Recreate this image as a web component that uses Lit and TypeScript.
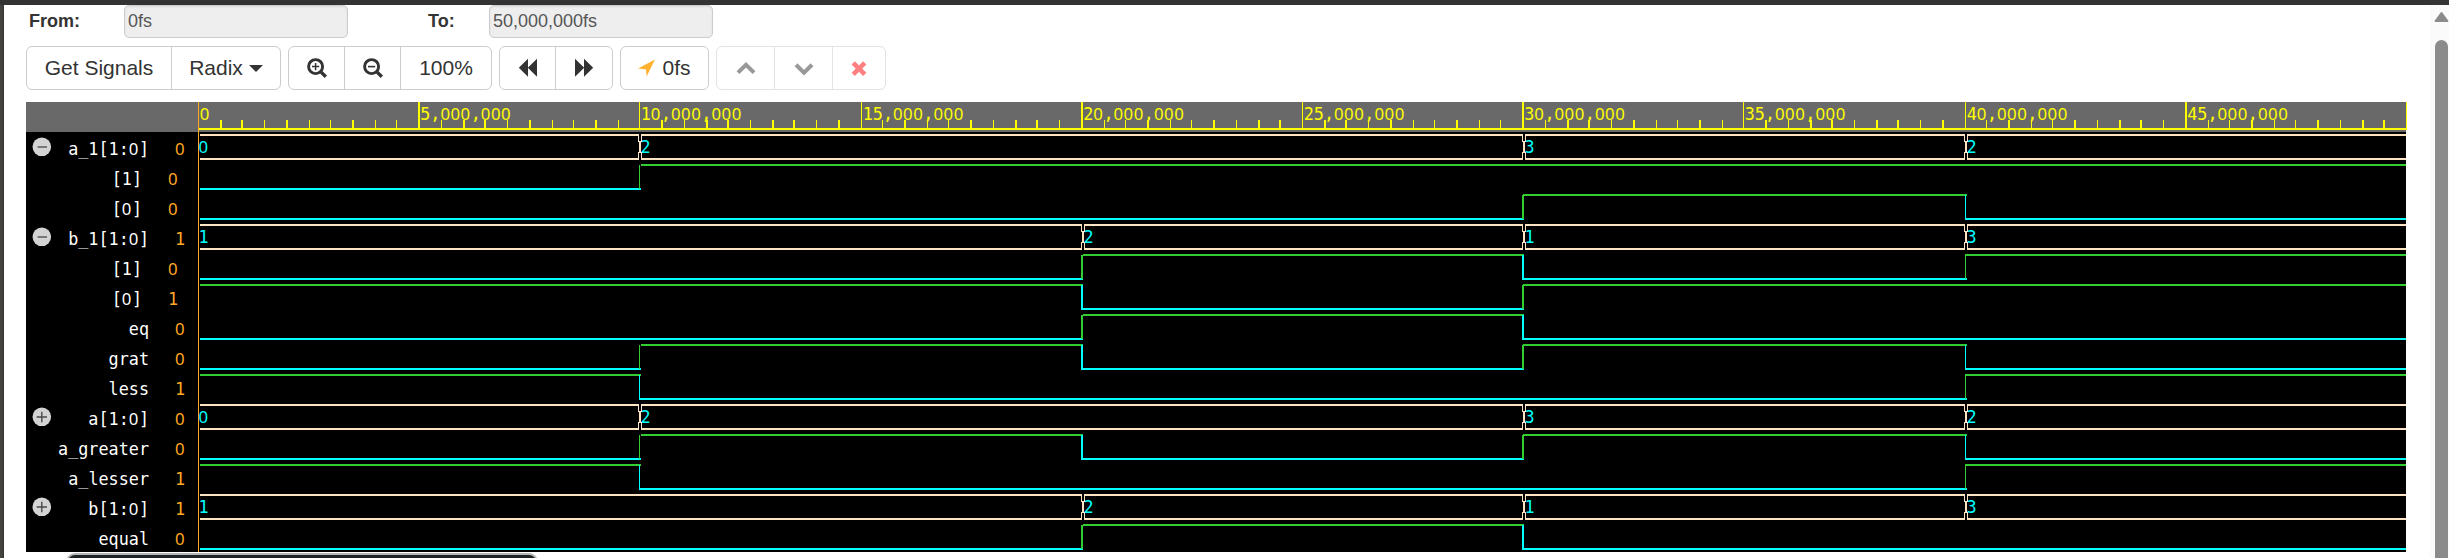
import { LitElement, html, svg, css } from "lit";
import { customElement, property } from "lit/decorators.js";

interface Signal {
  name: string;
  levels: number[];
  kind: "bus" | "bit";
  toggle?: "minus" | "plus";
  nested?: boolean;
}

const SIGNALS: Signal[] = [
  { name: "a_1[1:0]", kind: "bus", toggle: "minus", levels: [0, 2, 2, 3, 2] },
  { name: "[1]", kind: "bit", nested: true, levels: [0, 1, 1, 1, 1] },
  { name: "[0]", kind: "bit", nested: true, levels: [0, 0, 0, 1, 0] },
  { name: "b_1[1:0]", kind: "bus", toggle: "minus", levels: [1, 1, 2, 1, 3] },
  { name: "[1]", kind: "bit", nested: true, levels: [0, 0, 1, 0, 1] },
  { name: "[0]", kind: "bit", nested: true, levels: [1, 1, 0, 1, 1] },
  { name: "eq", kind: "bit", levels: [0, 0, 1, 0, 0] },
  { name: "grat", kind: "bit", levels: [0, 1, 0, 1, 0] },
  { name: "less", kind: "bit", levels: [1, 0, 0, 0, 1] },
  { name: "a[1:0]", kind: "bus", toggle: "plus", levels: [0, 2, 2, 3, 2] },
  { name: "a_greater", kind: "bit", levels: [0, 1, 0, 1, 0] },
  { name: "a_lesser", kind: "bit", levels: [1, 0, 0, 0, 1] },
  { name: "b[1:0]", kind: "bus", toggle: "plus", levels: [1, 1, 2, 1, 3] },
  { name: "equal", kind: "bit", levels: [0, 0, 1, 0, 0] },
];

const WIDTH = 2208;
const HEADER = 30;
const ROW = 30;

/** Horizontal position of the n-th minor tick (500,000fs apart). */
const tickX = (n: number) => 1.5 * Math.round(14.72 * n);
/** Stroke thickness of a one-unit line at x on the 1.5 device grid. */
const tickW = (x: number) => (Number.isInteger(x) ? 1 : 2);

/** Splits text so that zeros can be set in a face whose zero is undotted. */
const zeroParts = (text: string) => text.split(/(0+)/).filter((p) => p !== "");

const monoHtml = (text: string) =>
  zeroParts(text).map((p) => (p[0] === "0" ? html`<span class="zero">${p}</span>` : p));
const monoSvg = (text: string) =>
  zeroParts(text).map((p) =>
    p[0] === "0" ? svg`<tspan class="zero">${p}</tspan>` : svg`<tspan>${p}</tspan>`
  );

const monoStyles = css`
  .mono {
    font-family: "DejaVu Sans Mono", monospace;
    font-size: 16.8px;
    white-space: pre;
  }
  .zero {
    font-family: "Noto Sans", sans-serif;
    letter-spacing: 0.03em;
  }
`;

@customElement("signal-list")
class SignalList extends LitElement {
  static styles = [
    monoStyles,
    css`
      :host {
        display: block;
        width: 172px;
        background: #000;
      }
      .header {
        height: 30px;
        background: #696969;
      }
      .row {
        box-sizing: border-box;
        height: 30px;
        display: grid;
        grid-template-columns: 32px 91px 36px;
        align-items: start;
      }
      .row.nested {
        grid-template-columns: 32px 84px 36px;
      }
      .toggle {
        display: block;
        width: 20px;
        height: 20px;
        margin: 5px 0 0 6px;
      }
      .name,
      .value {
        padding-top: 4px;
        height: 26px;
        line-height: 26px;
        text-align: right;
      }
      .name {
        display: flex;
        justify-content: flex-end;
        color: #fff;
      }
      .value {
        color: #ffa824;
      }
    `,
  ];

  render() {
    return html`
      <div class="header"></div>
      ${SIGNALS.map(
        (s) => html`
          <div class="row ${s.nested ? "nested" : ""}">
            <div>
              ${s.toggle
                ? html`<svg class="toggle" viewBox="0 0 20 20">
                    <circle cx="9.8" cy="9.8" r="9.3" fill="#d3d3d3" />
                    <path
                      d=${s.toggle === "plus" ? "M4.6 10H15M9.8 4.8V15.2" : "M5.6 10H15"}
                      stroke=${s.toggle === "plus" ? "#4a4a4a" : "#777"}
                      stroke-width=${s.toggle === "plus" ? 1.4 : 2}
                      fill="none"
                    />
                  </svg>`
                : ""}
            </div>
            <div class="name mono"><span>${monoHtml(s.name)}</span></div>
            <div class="value mono">${monoHtml(String(s.levels[0]))}</div>
          </div>
        `
      )}
    `;
  }
}

@customElement("wave-view")
class WaveView extends LitElement {
  static styles = [
    monoStyles,
    css`
      :host {
        display: block;
        width: 2209px;
        height: 450px;
      }
      svg {
        display: block;
      }
      .bar {
        fill: #696969;
      }
      .scale {
        fill: #ff0;
      }
      .cursor {
        fill: #ffa824;
      }
      .bus {
        fill: #ffe4c4;
      }
      .hi {
        fill: #32cd32;
      }
      .lo,
      .data {
        fill: #0ff;
      }
    `,
  ];

  private rect(cls: string, x: number, y: number, w: number, h: number) {
    return svg`<rect class=${cls} x=${x} y=${y} width=${w} height=${h} />`;
  }

  private ruler() {
    const out = [];
    for (let n = 1; n <= 100; n++) {
      const x = tickX(n);
      const major = n % 10 === 0;
      const w = n === 100 ? 1 : tickW(x);
      out.push(this.rect("scale", Math.floor(x), major ? 0 : 18, w, major ? 27 : 9));
    }
    for (let n = 0; n < 100; n += 10) {
      const label = (n * 500000).toLocaleString("en-US");
      out.push(svg`<text class="scale mono" x=${tickX(n) + 1.7} y="18">${monoSvg(label)}</text>`);
    }
    return out;
  }

  private changes(levels: number[]) {
    const list: { x: number; level: number }[] = [];
    levels.forEach((level, i) => {
      if (i === 0 || level !== levels[i - 1]) list.push({ x: tickX(i * 20), level });
    });
    return list;
  }

  private bit(s: Signal, top: number) {
    const list = this.changes(s.levels);
    return list.map(({ x, level }, i) => {
      const next = list[i + 1];
      const cls = level ? "hi" : "lo";
      const start = i === 0 ? 2 : Math.floor(x) + (level ? (x < 1000 ? 2 : tickW(x) - 1) : 0);
      const end = next ? Math.floor(next.x) + 2 : WIDTH;
      return svg`
        ${this.rect(cls, start, top + (level ? 2 : 26), end - start, 2)}
        ${i > 0 ? this.rect(cls, Math.floor(x), top + 3, tickW(x), 24) : ""}
      `;
    });
  }

  private bus(s: Signal, top: number) {
    const list = this.changes(s.levels);
    return list.map(({ x, level }, i) => {
      const next = list[i + 1];
      const c = Math.ceil(x);
      const start = i === 0 ? 2 : c + 2;
      const end = next ? Math.ceil(next.x) : WIDTH;
      return svg`
        ${this.rect("bus", start, top + 2, end - start, 2)}
        ${this.rect("bus", start, top + 26, end - start, 2)}
        ${
          i > 0
            ? svg`
          ${this.rect("bus", c - 1, top + 2, 1, 8)}
          ${this.rect("bus", c, top + 9, 1, 12)}
          ${this.rect("bus", c - 1, top + 20, 1, 8)}
          ${this.rect("bus", c + 2, top + 2, 1, 8)}
          ${this.rect("bus", c + 1, top + 9, 1, 12)}
          ${this.rect("bus", c + 2, top + 20, 1, 8)}`
            : ""
        }
        <text class="data mono" x=${i === 0 ? 0.5 : c + 1.4} y=${top + 21}>${monoSvg(String(level))}</text>
      `;
    });
  }

  render() {
    return html`
      <svg width="2209" height="450" viewBox="0 0 2209 450">
        <rect x="0" y="0" width=${WIDTH} height="450" fill="#000" />
        ${this.rect("bar", 0, 0, WIDTH, HEADER)}
        ${this.ruler()}
        ${this.rect("scale", 1, 26, WIDTH, 2)}
        ${SIGNALS.map((s, i) =>
          s.kind === "bus" ? this.bus(s, HEADER + i * ROW) : this.bit(s, HEADER + i * ROW)
        )}
        ${this.rect("cursor", 0, 0, 1, 450)}
      </svg>
    `;
  }
}

const ICONS: Record<string, unknown> = {
  zoomIn: svg`<circle cx="8.6" cy="8.6" r="7" fill="none" stroke="#333" stroke-width="2.9"/><path d="M13.6 13.6L18.8 18.8" stroke="#333" stroke-width="3.4"/><path d="M5 8.6H12.2M8.6 5V12.2" stroke="#333" stroke-width="1.5"/>`,
  zoomOut: svg`<circle cx="8.6" cy="8.6" r="7" fill="none" stroke="#333" stroke-width="2.9"/><path d="M13.6 13.6L18.8 18.8" stroke="#333" stroke-width="3.4"/><path d="M5 8.6H12.2" stroke="#333" stroke-width="1.6"/>`,
  back: svg`<path d="M.8 9.8L10 .8V18.8ZM9.8 9.8L19 .8V18.8Z" fill="#333"/>`,
  forward: svg`<path d="M19.2 9.8L10 .8V18.8ZM10.2 9.8L1 .8V18.8Z" fill="#333"/>`,
  arrow: svg`<path d="M17 1.6L8.6 18.6L8 11.4L0 10.6Z" fill="#ffb230"/>`,
  up: svg`<path d="M2 14.6L10 6.8L18 14.6" fill="none" stroke="#999" stroke-width="4"/>`,
  down: svg`<path d="M2 6.8L10 14.6L18 6.8" fill="none" stroke="#999" stroke-width="4"/>`,
  remove: svg`<path d="M4.2 4.8L15.8 16.4M15.8 4.8L4.2 16.4" fill="none" stroke="#ff8080" stroke-width="4.6"/>`,
};

@customElement("tool-icon")
class ToolIcon extends LitElement {
  @property() name = "";
  static styles = css`
    :host {
      display: block;
      flex: none;
      width: 20px;
      height: 20px;
    }
    svg {
      display: block;
    }
  `;
  render() {
    return html`<svg width="20" height="20" viewBox="0 0 20 20">${ICONS[this.name]}</svg>`;
  }
}

@customElement("app-root")
class AppRoot extends LitElement {
  static styles = css`
    :host {
      display: block;
      position: relative;
      height: 558px;
      overflow: hidden;
      background: #fff;
      color: #333;
      font-family: "Liberation Sans", Arial, sans-serif;
    }
    .top {
      height: 5px;
      background: #333;
    }
    .main {
      display: grid;
      grid-template-columns: 4px 1fr 19px;
      height: 553px;
    }
    .backdrop {
      background: linear-gradient(90deg, #45433f 0 2px, #33322f 4px);
    }
    .content {
      padding-left: 22px;
    }
    .range {
      display: grid;
      grid-template-columns: 98px 224px 80px 61px 224px;
      height: 33px;
      font-size: 18px;
      line-height: 32px;
    }
    .range b {
      padding-left: 3px;
      white-space: nowrap;
    }
    .range .to {
      grid-column: 3 / 5;
      padding-left: 80px;
    }
    .field {
      box-sizing: border-box;
      height: 33px;
      padding-left: 3px;
      border: 1px solid #ccc;
      border-radius: 5px;
      background: #eee;
      color: #555;
      box-shadow: inset 0 1px 2px rgba(0, 0, 0, 0.08);
      line-height: 30px;
    }
    .toolbar {
      display: flex;
      gap: 7px;
      padding-top: 8px;
    }
    .group {
      box-sizing: border-box;
      display: flex;
      height: 44px;
      border: 1px solid #ccc;
      border-radius: 6px;
    }
    .btn {
      box-sizing: border-box;
      display: flex;
      align-items: center;
      justify-content: center;
      font-size: 21px;
      line-height: 42px;
      white-space: nowrap;
    }
    .btn + .btn {
      border-left: 1px solid #ccc;
    }
    .off,
    .off .btn {
      border-color: #e3e3e3;
    }
    .w145 { width: 144px; }
    .w109 { width: 109px; }
    .w55 { width: 55px; }
    .w56 { width: 56px; }
    .w57 { width: 57px; }
    .w58 { width: 58px; }
    .w53 { width: 53px; }
    .w87 { width: 87px; gap: 4px; }
    .w91 { width: 91px; }
    .caret {
      width: 0;
      margin: 0 0 0 6px;
      border: 6px solid transparent;
      border-top: 7px solid #333;
      border-bottom: 0;
      border-left-width: 7px;
      border-right-width: 7px;
    }
    .viewer {
      display: flex;
      margin-top: 12px;
    }
    .scroll {
      display: flex;
      flex-direction: column;
      align-items: center;
      background: #fafafa;
    }
    .scroll svg {
      display: block;
      margin: 6px 0 18px 3px;
    }
    .thumb {
      width: 13px;
      flex: 1;
      margin-left: 5px;
      border-radius: 7px 7px 0 0;
      background: #8b8b8b;
      align-self: flex-start;
    }
    .popup {
      position: absolute;
      left: 66px;
      top: 553px;
      width: 472px;
      height: 40px;
      box-sizing: border-box;
      border: 2px solid #b5b7b5;
      border-radius: 9px;
      background: #202326;
    }
  `;

  render() {
    return html`
      <div class="top"></div>
      <div class="main">
        <div class="backdrop"></div>
        <div class="content">
          <div class="range">
            <b>From:</b>
            <div class="field">0fs</div>
            <b class="to">To:</b>
            <div class="field">50,000,000fs</div>
          </div>
          <div class="toolbar">
            <div class="group">
              <div class="btn w145">Get Signals</div>
              <div class="btn w109">Radix<span class="caret"></span></div>
            </div>
            <div class="group">
              <div class="btn w55"><tool-icon name="zoomIn"></tool-icon></div>
              <div class="btn w56"><tool-icon name="zoomOut"></tool-icon></div>
              <div class="btn w91">100%</div>
            </div>
            <div class="group">
              <div class="btn w55"><tool-icon name="back"></tool-icon></div>
              <div class="btn w57"><tool-icon name="forward"></tool-icon></div>
            </div>
            <div class="group">
              <div class="btn w87"><tool-icon name="arrow"></tool-icon>0fs</div>
            </div>
            <div class="group off">
              <div class="btn w57"><tool-icon name="up"></tool-icon></div>
              <div class="btn w58"><tool-icon name="down"></tool-icon></div>
              <div class="btn w53"><tool-icon name="remove"></tool-icon></div>
            </div>
          </div>
          <div class="viewer">
            <signal-list></signal-list>
            <wave-view></wave-view>
          </div>
        </div>
        <div class="scroll">
          <svg width="15" height="11" viewBox="0 0 15 11">
            <path d="M7.5 2L13.4 10H1.6Z" fill="#8b8b8b" stroke="#8b8b8b" stroke-width="2" stroke-linejoin="round" />
          </svg>
          <div class="thumb"></div>
        </div>
      </div>
      <div class="popup"></div>
    `;
  }
}
